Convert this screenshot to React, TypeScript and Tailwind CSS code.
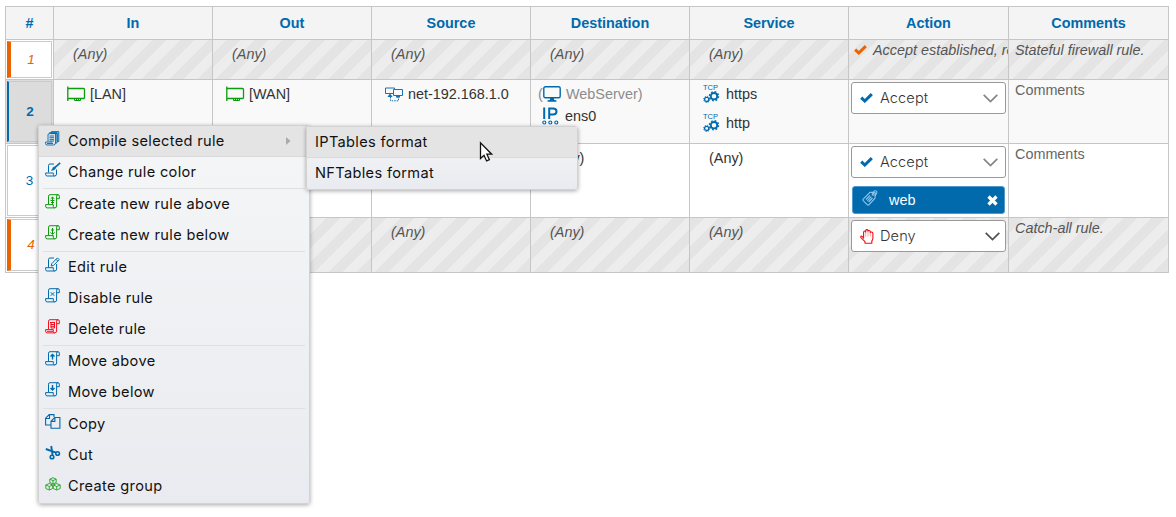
import type { ReactNode } from 'react';

const BLUE = '#006aac';
const GREEN = '#0e9a0e';

/* ---------- icons ---------- */

function Scroll({ color, children }: { color: string; children?: ReactNode }) {
  return (
    <svg width="15" height="15" viewBox="0 0 15 15" fill="none" stroke={color} strokeWidth="1">
      <path d="M3.500 10V2.200Q3.500.7 5 .7H13q1.300 0 1.300 1.400V4.700H11.600V2.200Q11.600.7 13 .7M11.600 4.500V12q0 1.900-1.900 1.900H2.200Q.6 13.900.6 12.200V10.600H8.300V12.300q0 1.600 1.400 1.600" />
      {children}
    </svg>
  );
}

function CompileIcon() {
  return (
    <svg width="15" height="15" viewBox="0 0 15 15" fill="none" stroke={BLUE} strokeWidth=".9">
      <path fill="#a9c6dc" d="M6.500 2V.6H13.800V10.500H12.200V2.500H6z" />
      <path d="M3 10.500V4Q3 2.600 4.300 2.600H10.500V12q0 2-2 2H2Q.6 14 .6 12.500V11H7.500M4.500 2.500V1.600H12V12H10.500" />
      <path d="M4.500 5H9M4.500 6.700H9M4.500 8.400H9M4.500 10H9M2 12.500H8" />
    </svg>
  );
}

function BrushIcon() {
  return (
    <svg width="16" height="15" viewBox="0 0 16 15" fill="none" stroke={BLUE} strokeWidth="1">
      <path d="M9 2H5Q3.500 2 3.500 3.500V10.500M11.500 7.500V12q0 2-1.900 2H2.200Q.6 14 .6 12.400V11H8.300V12.400q0 1.600 1.300 1.600" />
      <path strokeWidth="1.600" d="M15.200.8 9.500 5.800" />
      <path fill={BLUE} strokeWidth=".6" d="M9.300 5 10.500 6.200Q9.500 8.600 6.300 8.300 7.600 7.500 7.700 6.400 8 5 9.300 5z" />
    </svg>
  );
}

function EditIcon() {
  return (
    <svg width="15" height="15" viewBox="0 0 15 15" fill="none" stroke={BLUE} strokeWidth="1">
      <path d="M9 1H5Q3.500 1 3.500 2.500V10.500M11.600 7V12q0 2-1.900 2H2.200Q.6 14 .6 12.400V10.700H8.300V12.400q0 1.600 1.400 1.600" />
      <path d="M12.400.9 14.200 2.700 8.400 8.500 6.200 9 6.700 6.700zM11 2.300 12.800 4.100" />
    </svg>
  );
}

function CopyIcon() {
  return (
    <svg width="16" height="15" viewBox="0 0 16 15" fill="none" stroke={BLUE} strokeWidth="1.100">
      <path d="M6 11H.6V4.200L4.200.6H9V3M4.500.6V4.500H.6M6 7.200 9.700 3.500H14.900V14.300H6zM9.900 3.500V7.400H6" />
    </svg>
  );
}

function CutIcon() {
  return (
    <svg width="16" height="15" viewBox="0 0 16 15" fill="none" stroke={BLUE} strokeWidth="1.600">
      <circle cx="7" cy="12" r="1.800" />
      <circle cx="12.600" cy="8.500" r="1.800" />
      <path strokeWidth="1.900" d="M6.200 1 7.600 10M.8 4 11 7.700" />
    </svg>
  );
}

function GroupIcon() {
  return (
    <svg width="16" height="14" viewBox="0 0 16 14" fill="none" stroke="#35a835" strokeWidth="1">
      <path d="M8 .7 11.200 2.200V5.500L8 7 4.800 5.500V2.200zM4.800 2.200 8 3.600 11.200 2.200M8 3.600V7" />
      <path d="M4.300 6.500 7.700 8V11.500L4.300 13 .8 11.500V8zM.8 8 4.300 9.500 7.700 8M4.300 9.500V13" />
      <path d="M11.700 6.500 15.200 8V11.500L11.700 13 8.300 11.500V8zM8.300 8 11.700 9.500 15.200 8M11.700 9.500V13" />
    </svg>
  );
}

function NicIcon() {
  return (
    <svg width="19" height="17" viewBox="0 0 19 17" fill="none" stroke={GREEN} strokeWidth="1.300">
      <path d="M.8.5V15M1 2.500H16.500Q17.500 2.500 17.500 3.500V11.500Q17.500 12.500 16.500 12.500H1" />
      <path strokeWidth="1" d="M7.500 12.500V14.500H13.500V12.500M9.500 12.500V14.500M11.500 12.500V14.500" />
    </svg>
  );
}

function NetIcon() {
  return (
    <svg width="19" height="15" viewBox="0 0 19 15" fill="none" stroke="#1673b5" strokeWidth="1">
      <path d="M8 6.500H.5V1H9.500V2.500M8.500 2.500H17.500V8.500H8.500zM5 6.500V9M13 8.500V11" />
      <path fill={BLUE} strokeWidth="1" d="M3 9.500 5 7.500 7 9.500zM11 10 13 8.500 15 10z" />
      <path strokeDasharray="1.500 1" d="M5.500 10V13.800H13.500V11" />
    </svg>
  );
}

function HostIcon() {
  return (
    <svg width="18" height="16" viewBox="0 0 18 16" fill="none" stroke={BLUE} strokeWidth="1.400">
      <rect x=".8" y=".8" width="16.400" height="11" rx="1.500" />
      <path fill={BLUE} stroke="none" d="M7 12H11V13.800L13.500 14.500V15.700H4.500V14.500L7 13.800z" />
    </svg>
  );
}

function IpIcon() {
  return (
    <svg width="17" height="18" viewBox="0 0 17 18" fill="none" stroke={BLUE} strokeWidth="2">
      <path d="M2.200.5V12M7.200 12V1.500H11Q14.500 1.500 14.500 4.500T11 7.500H7.500" />
      <g strokeWidth="1.200">
        <circle cx="2.300" cy="15.500" r="1.500" />
        <circle cx="8.300" cy="15.500" r="1.500" />
        <circle cx="14.300" cy="15.500" r="1.500" />
      </g>
    </svg>
  );
}

function TcpIcon() {
  return (
    <span className="flex h-[18px] w-[17px] shrink-0 flex-col">
      <span className="h-[6px] font-['Liberation_Sans'] text-[7.500px] leading-[6px] text-[#006aac]">TCP</span>
      <svg width="17" height="12" viewBox="0 0 17 12" fill="none" stroke={BLUE}>
        <circle cx="11" cy="5.200" r="3.200" strokeWidth="1.800" />
        <circle cx="11" cy="5.200" r="4.600" strokeWidth="1.300" strokeDasharray="1.800 1.810" />
        <circle cx="3.700" cy="8.400" r="2.100" strokeWidth="1.300" />
        <circle cx="3.700" cy="8.400" r="3.100" strokeWidth=".9" strokeDasharray="1.200 1.230" />
      </svg>
    </span>
  );
}

function CheckIcon({ color }: { color: string }) {
  return (
    <svg width="13" height="10" viewBox="0 0 13 10" fill="none" stroke={color} strokeWidth="3">
      <path d="M1.200 4.600 4.800 8 11.800 1.200" />
    </svg>
  );
}

function HandIcon() {
  return (
    <svg width="14" height="15" viewBox="0 0 14 15" fill="none" stroke="#f01010" strokeWidth="1.100" strokeLinejoin="round">
      <path d="M3.600 9.500V3.200Q3.700 2 4.700 2 5.700 2 5.700 3V1.600Q5.900.6 6.900.6 7.900.6 8 1.600V2.200Q8.200 1.400 9.100 1.500 10.200 1.600 10.300 2.600V3.600Q10.600 2.900 11.500 3 12.800 3.200 12.900 4.400V8.500Q12.900 11 11.800 12V14.300H5V12.600L.9 8.600Q.5 7.500 1.300 7 2.300 6.600 3.600 9.500" />
      <path strokeWidth=".6" opacity=".6" d="M5.700 3V7.500M8 2.500V7.500M10.300 3.500V7.500" />
    </svg>
  );
}

function TagIcon() {
  return (
    <svg width="17" height="17" viewBox="0 0 17 17" fill="none" stroke="#8fc4ea" strokeWidth="1.100">
      <path d="M1.200 9.200 8 2.400 12.300 2.200 13.400 3.200 13 8.200 6.900 14.800Q6 15.500 5.200 14.700L1.200 10.700Q.6 10 1.200 9.200z" />
      <path d="M4 9.500 8 5.500M5.300 10.800 9.400 6.700M6.600 12 10.500 8" />
      <circle cx="11.200" cy="4.300" r="1" />
      <path d="M11.200 4Q11 .7 13.500.8 15.700 1 14.400 3.800L13 6" />
    </svg>
  );
}

function Chevron({ color }: { color: string }) {
  return (
    <svg width="15" height="9" viewBox="0 0 15 9" fill="none" stroke={color} strokeWidth="1.700">
      <path d="M.7.8 7.500 7.500 14.300.8" />
    </svg>
  );
}

/* ---------- table ---------- */

const CELL = 'border-r border-b border-[#c6c6c6] overflow-hidden';
const STRIPES =
  'bg-[repeating-linear-gradient(-45deg,#e4e4e4_0px,#e4e4e4_10px,#ededed_10px,#ededed_20px)]';
const GRID = 'grid grid-cols-[48px_159px_159px_159px_159px_159px_160px_160px]';

function AnyCell({ striped }: { striped?: boolean }) {
  return (
    <div className={`${CELL} pt-1 pl-[19px] ${striped ? `${STRIPES} italic text-[#555]` : 'text-[#333]'}`}>(Any)</div>
  );
}

function NumCell({ n, look }: { n: number; look: 'special' | 'selected' | 'plain' }) {
  const looks = {
    special: 'border-l-4 border-l-[#ea6300] italic text-[#ea6300]',
    selected: 'border-l-2 border-l-[#006aac] font-bold text-[#006aac]',
    plain: 'text-[#006aac]',
  };
  return (
    <div className={`${CELL} flex p-px ${look === 'selected' ? 'bg-[#dcdcdc]' : 'bg-white'}`}>
      <div className={`flex grow items-center justify-center border border-[#cacaca] text-[13.500px] ${looks[look]}`}>{n}</div>
    </div>
  );
}

function Select({ icon, label, chevron, pad }: { icon: ReactNode; label: string; chevron: string; pad: string }) {
  return (
    <div className={`flex h-8 w-[155px] items-center rounded-[3px] border border-[#999] bg-white pl-2 ${pad}`}>
      <span className="flex w-5 items-center">{icon}</span>
      <span className="grow font-['Inter',sans-serif] text-[14.600px] font-light tracking-[0.1px] text-[#333]">{label}</span>
      <Chevron color={chevron} />
    </div>
  );
}

function Item({ icon, children }: { icon: ReactNode; children: ReactNode }) {
  return (
    <div className="flex h-5 items-center">
      <span className="flex w-[23px] shrink-0">{icon}</span>
      {children}
    </div>
  );
}

const HEADS = ['#', 'In', 'Out', 'Source', 'Destination', 'Service', 'Action', 'Comments'];

function Rules() {
  return (
    <div className="w-[1164px] border-t border-l border-[#c6c6c6] text-[14.400px] leading-5 whitespace-nowrap">
      <div className={`${GRID} h-[33px] bg-[#f4f4f4]`}>
        {HEADS.map((h) => (
          <div key={h} className={`${CELL} flex items-center justify-center font-bold text-[#006aac]`}>{h}</div>
        ))}
      </div>

      <div className={`${GRID} h-10`}>
        <NumCell n={1} look="special" />
        <AnyCell striped />
        <AnyCell striped />
        <AnyCell striped />
        <AnyCell striped />
        <AnyCell striped />
        <div className={`${CELL} ${STRIPES} flex pl-[5px] italic text-[#555]`}>
          <span className="mt-[5px] w-[19px] shrink-0"><CheckIcon color="#ea6300" /></span>
          Accept established, related
        </div>
        <div className={`${CELL} ${STRIPES} pl-1.5 italic text-[#555]`}>Stateful firewall rule.</div>
      </div>

      <div className={`${GRID} h-16 bg-[#f9f9f9] text-[#333]`}>
        <NumCell n={2} look="selected" />
        <div className={`${CELL} pt-1 pl-[13px]`}><Item icon={<NicIcon />}>[LAN]</Item></div>
        <div className={`${CELL} pt-1 pl-[13px]`}><Item icon={<NicIcon />}>[WAN]</Item></div>
        <div className={`${CELL} pt-1 pl-[13px]`}><Item icon={<NetIcon />}>net-192.168.1.0</Item></div>
        <div className={`${CELL} pt-1 pl-[7px]`}>
          <div className="flex items-center text-[#8c8c8c]">
            <span className="w-[5px]">(</span>
            <span className="flex w-[23px] shrink-0"><HostIcon /></span>WebServer)
          </div>
          <div className="mt-0.5 pl-1"><Item icon={<IpIcon />}>ens0</Item></div>
        </div>
        <div className={`${CELL} pt-1 pl-[13px]`}>
          <Item icon={<TcpIcon />}>https</Item>
          <div className="mt-[9px]"><Item icon={<TcpIcon />}>http</Item></div>
        </div>
        <div className={`${CELL} p-0.5`}>
          <Select icon={<CheckIcon color={BLUE} />} label="Accept" chevron="#858585" pad="pr-[7px]" />
        </div>
        <div className={`${CELL} pl-1.5 text-[#666]`}>Comments</div>
      </div>

      <div className={`${GRID} h-[74px]`}>
        <NumCell n={3} look="plain" />
        <AnyCell />
        <AnyCell />
        <AnyCell />
        <AnyCell />
        <AnyCell />
        <div className={`${CELL} p-0.5`}>
          <Select icon={<CheckIcon color={BLUE} />} label="Accept" chevron="#858585" pad="pr-[7px]" />
          <div className="mt-2 ml-px flex h-7 w-[153px] items-center rounded-[3px] border border-[#4d98d0] bg-[#006aac] pr-[6px] pl-[9px] text-white">
            <span className="-mt-1 w-[27px]"><TagIcon /></span>
            <span className="grow">web</span>
            <svg width="11" height="11" viewBox="0 0 11 11" stroke="#fff" strokeWidth="3.200"><path d="M1.500 1.500 9.500 9.500M9.500 1.500 1.500 9.500" /></svg>
          </div>
        </div>
        <div className={`${CELL} pl-1.5 text-[#666]`}>Comments</div>
      </div>

      <div className={`${GRID} h-[55px]`}>
        <NumCell n={4} look="special" />
        <AnyCell striped />
        <AnyCell striped />
        <AnyCell striped />
        <AnyCell striped />
        <AnyCell striped />
        <div className={`${CELL} ${STRIPES} p-0.5`}>
          <Select icon={<HandIcon />} label="Deny" chevron="#505050" pad="pr-[5px]" />
        </div>
        <div className={`${CELL} ${STRIPES} pl-1.5 italic text-[#555]`}>Catch-all rule.</div>
      </div>
    </div>
  );
}

/* ---------- context menu ---------- */

type Entry = { label: string; icon: ReactNode; divider?: boolean; sub?: boolean };

const MENU: Entry[] = [
  { label: 'Compile selected rule', icon: <CompileIcon />, sub: true },
  { label: 'Change rule color', icon: <BrushIcon /> },
  { label: 'Create new rule above', divider: true, icon: <Scroll color={GREEN}><path d="M7.500 3V10M5.700 4.800 7.500 3 9.300 4.800M5.500 6.500H9.500M6 8.500H9" /></Scroll> },
  { label: 'Create new rule below', icon: <Scroll color={GREEN}><path d="M7.500 3V9.500M5.500 7.300 7.500 9.300 9.500 7.300M6 5H9" /></Scroll> },
  { label: 'Edit rule', divider: true, icon: <EditIcon /> },
  { label: 'Disable rule', icon: <Scroll color={BLUE}><path d="M5.700 4.200 9.300 7.800M9.300 4.200 5.700 7.800" /></Scroll> },
  { label: 'Delete rule', icon: <Scroll color="#f01020"><path d="M5 3.500H10M6 3.500V9H9.500V3.500M5.800 5.500H9.500M5.800 7.300H9.500M2 12.300H8" /></Scroll> },
  { label: 'Move above', divider: true, icon: <Scroll color={BLUE}><path strokeWidth="1.400" d="M7.500 3.500V8.500M5.500 5.500 7.500 3.500 9.500 5.500" /></Scroll> },
  { label: 'Move below', icon: <Scroll color={BLUE}><path strokeWidth="1.400" d="M7.500 3V8M5.500 6 7.500 8 9.500 6" /></Scroll> },
  { label: 'Copy', divider: true, icon: <CopyIcon /> },
  { label: 'Cut', icon: <CutIcon /> },
  { label: 'Create group', icon: <GroupIcon /> },
];

const MENU_BOX =
  "absolute w-[272px] rounded-[3px] border border-[#d2d2d2] font-['Inter',sans-serif] text-[14.600px] text-[#111] shadow-[0_1px_4px_rgba(0,0,0,0.35)]";

function ContextMenu() {
  return (
    <div className={`${MENU_BOX} top-[125px] left-[38px] bg-linear-to-b from-[#f5f6f7] to-[#e9ebf0] pb-px`}>
      {MENU.map((m) => (
        <div key={m.label}>
          {m.divider && <div className="mr-1 ml-1 h-px bg-[#dfe0e2]" />}
          <div className={`flex h-[31px] items-center pr-[18px] pl-[6px] ${m.sub ? 'bg-[#e4e4e4] shadow-[inset_0_-1px_#dadada]' : ''}`}>
            <span className="-mt-[6px] w-[23px] shrink-0">{m.icon}</span>
            <span className="grow tracking-[0.33px]">{m.label}</span>
            {m.sub && <svg className="-mt-px" width="5" height="8" viewBox="0 0 5 8"><path fill="#aaa" d="M0 0 4.500 4 0 8z" /></svg>}
          </div>
        </div>
      ))}
    </div>
  );
}

function SubMenu() {
  return (
    <div className={`${MENU_BOX} top-[126px] left-[306px] bg-linear-to-b from-[#f5f6f7] to-[#e9ebf0]`}>
      <div className="flex h-[31px] items-center border-b border-[#dadada] bg-[#e4e4e4] pt-0.5 pl-2 tracking-[0.33px]">IPTables format</div>
      <div className="flex h-[31px] items-center pl-2 tracking-[0.33px]">NFTables format</div>
    </div>
  );
}

export default function App() {
  return (
    <div className="relative h-[517px] w-[1176px] overflow-hidden bg-white pt-1.5 pl-[5px] font-['Liberation_Sans',sans-serif]">
      <Rules />
      <ContextMenu />
      <SubMenu />
      <svg className="absolute top-[141px] left-[479px]" width="15" height="23" viewBox="0 0 15 23">
        <path fill="#fff" stroke="#111" strokeWidth="1.300" d="M1.500 1.800V17.500L5 14.300 7.600 20 10.400 18.700 7.900 13.200H12.700z" />
      </svg>
    </div>
  );
}
